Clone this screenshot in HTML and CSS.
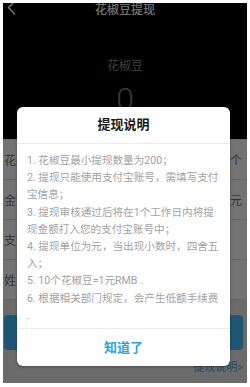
FILE: index.html
```html
<!DOCTYPE html>
<html lang="zh-CN">
<head>
<meta charset="utf-8">
<title>花椒豆提现</title>
<link rel="stylesheet" href="styles.css">
</head>
<body>
<div class="screen">
  <div class="top">
    <div class="appbar">
      <svg class="back" width="12" height="14" viewBox="0 0 12 14"><path d="M8 -2 L1.5 4.5 L7.5 11" fill="none" stroke="#fff" stroke-width="1.6" stroke-linecap="round" stroke-linejoin="round"/></svg>
      <div class="title">花椒豆提现</div>
      <span></span>
    </div>
    <div class="balance">
      <div class="bal-label">花椒豆</div>
      <div class="bal-num">0</div>
    </div>
  </div>
  <div class="form">
    <div class="row"><span class="label">花椒豆</span><span class="unit">个</span></div>
    <div class="row"><span class="label">金额</span><span class="unit">元</span></div>
    <div class="row"><span class="label">支付宝账号</span></div>
    <div class="row"><span class="label">姓名</span></div>
  </div>
  <div class="submit">提现</div>
  <div class="link">提现说明&gt;</div>
  <div class="mask"></div>
  <div class="dialog">
    <div class="dlg-title">提现说明</div>
    <div class="dlg-body">
      <p>1. 花椒豆最小提现数量为200；</p>
      <p>2. 提现只能使用支付宝账号，需填写支付宝信息；</p>
      <p>3. 提现审核通过后将在1个工作日内将提现金额打入您的支付宝账号中；</p>
      <p>4. 提现单位为元，当出现小数时，四舍五入；</p>
      <p>5. 10个花椒豆=1元RMB .</p>
      <p>6. 根据相关部门规定，会产生低额手续费 .</p>
    </div>
    <div class="dlg-foot">知道了</div>
  </div>
</div>
</body>
</html>
```
FILE: styles.css
```css
html, body {
  margin: 0;
  padding: 0;
  background: #ffffff;
}
body {
  font-family: Roboto, "Noto Sans CJK SC", sans-serif;
}
.screen {
  position: relative;
  margin: 3px 3px 0 3px;
  width: 244px;
  height: 380px;
  overflow: hidden;
  background: #eeeeee;
}
.top {
  background: #000;
  height: 136px;
  display: flex;
  flex-direction: column;
}
.appbar {
  height: 14px;
  display: grid;
  grid-template-columns: 1fr auto 1fr;
  align-items: start;
}
.back {
  margin-left: 4px;
  display: block;
}
.title {
  color: #fff;
  font-size: 12px;
  line-height: 14px;
  font-weight: 500;
}
.balance {
  display: flex;
  flex-direction: column;
  align-items: center;
  margin-top: 41px;
}
.bal-label {
  color: #8a8a8a;
  font-size: 12px;
  line-height: 16px;
}
.bal-num {
  margin-top: 9px;
  color: #7a7a7a;
  font-size: 32px;
  line-height: 32px;
  font-weight: 300;
}
.form {
  background: #ffffff;
  margin-top: 1px;
}
.row {
  height: 40px;
  box-sizing: border-box;
  border-bottom: 1px solid #e2e2e2;
  display: flex;
  align-items: center;
  justify-content: space-between;
  padding: 0 5px 0 1px;
  font-size: 12px;
}
.label { color: #7a7a7a; }
.unit { color: #7a7a7a; }
.submit {
  margin: 15px 4px 0 1px;
  height: 35px;
  border-radius: 4px;
  background: #44bcfa;
  color: #fff;
  font-size: 14px;
  display: flex;
  align-items: center;
  justify-content: center;
}
.link {
  margin-top: 10px;
  text-align: right;
  padding-right: 4px;
  font-size: 11px;
  line-height: 16px;
  color: #4aa6e0;
}
.mask {
  position: absolute;
  inset: 0;
  background: rgba(0, 0, 0, 0.55);
}
.dialog {
  position: absolute;
  left: 14px;
  top: 104px;
  width: 213px;
  background: #fff;
  border-radius: 6px;
  box-shadow: 0 1px 3px rgba(0,0,0,0.3);
}
.dlg-title {
  height: 36px;
  line-height: 36px;
  text-align: center;
  font-size: 13px;
  font-weight: 700;
  color: #1a1a1a;
  border-bottom: 1px solid #ececec;
}
.dlg-body {
  padding: 8px 8px 4px 10px;
  font-size: 10.6px;
  line-height: 17.2px;
  color: #a2a2a2;
  border-bottom: 1px solid #ececec;
  text-spacing-trim: space-all;
}
.dlg-body p {
  margin: 0;
}
.dlg-foot {
  height: 37px;
  line-height: 37px;
  text-align: center;
  font-size: 13px;
  font-weight: 700;
  color: #2aa5dc;
}
```
